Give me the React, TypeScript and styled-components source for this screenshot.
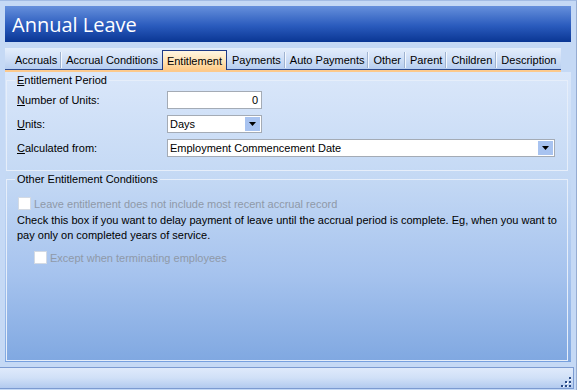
import React from 'react';
import styled, { createGlobalStyle } from 'styled-components';

const Global = createGlobalStyle`
  html, body { margin: 0; padding: 0; }
  body { font-family: "Liberation Sans", Arial, sans-serif; font-size: 11px; color: #000; }
`;

const Window = styled.div`
  width: 577px;
  height: 390px;
  box-sizing: border-box;
  background: #c5d9f5;
  border-top: 1px solid #a3bce4;
  border-right: 1px solid #95acd2;
  display: flex;
  flex-direction: column;
  overflow: hidden;
`;

const Body = styled.div`
  flex: 1;
  display: flex;
  flex-direction: column;
  padding: 5px 4px 0 5px;
  min-height: 0;
`;

const TitleBar = styled.div`
  height: 36px;
  flex: none;
  margin-right: 1px;
  background: linear-gradient(#6690dc, #2a5bbd 55%, #0a3694);
  color: #fff;
  font-family: "Open Sans", "Liberation Sans", sans-serif;
  font-size: 20px;
  display: flex;
  align-items: center;
  padding-left: 7px;
  box-sizing: border-box;
`;

const TabStrip = styled.div`
  margin-top: 6px;
  height: 21px;
  flex: none;
  width: fit-content;
  padding-left: 5px;
  padding-right: 1px;
  display: flex;
  align-items: flex-end;
  background: linear-gradient(#e4eefc, #cbdcf5 60%, #b7cef0);
`;

const Tab = styled.div<{ $active?: boolean; $sep?: boolean }>`
  height: ${(p) => (p.$active ? '20px' : '21px')};
  margin-bottom: ${(p) => (p.$active ? '-1px' : '0')};
  z-index: ${(p) => (p.$active ? 1 : 0)};
  box-sizing: border-box;
  display: flex;
  align-items: flex-end;
  padding: ${(p) => (p.$active ? '0 4px 2px 4px' : '0 4px 2px 5px')};
  line-height: 13px;
  white-space: nowrap;
  position: relative;
  background: ${(p) => (p.$active ? 'linear-gradient(#fff6e2, #ffe2b4 55%, #ffca86)' : 'transparent')};
  border: ${(p) => (p.$active ? '1px solid #1e3a86' : 'none')};
  border-bottom: none;
  &::before {
    content: '';
    display: ${(p) => (p.$sep ? 'block' : 'none')};
    position: absolute;
    left: -1px;
    top: 4px;
    bottom: 1px;
    width: 1px;
    background: #9fb3d0;
    box-shadow: 1px 0 0 #f4f8fe;
  }
`;

const TabLine = styled.div`
  width: 556px;
  height: 1px;
  flex: none;
  background: #2d4c92;
  border-bottom: 2px solid #fcc98c;
`;

const Panel = styled.div`
  flex: 1;
  display: flex;
  flex-direction: column;
  padding: 2px 3px 0 1px;
  margin-right: 1px;
  background: linear-gradient(#dae7fa, #c3d8f4 38%, #a6c3ee 70%, #80a8e1);
  border-bottom: 1px solid #77a0de;
  min-height: 0;
`;

const Group = styled.fieldset<{ $grow?: boolean }>`
  margin: ${(p) => (p.$grow ? '2px 0 0 0' : '0')};
  border: 1px solid #e6eefa;
  padding: ${(p) => (p.$grow ? '11px 9px 0 10px' : '4px 9px 13px 10px')};
  flex: ${(p) => (p.$grow ? 1 : 'none')};
  min-width: 0;
`;

const Legend = styled.legend`
  padding: 0 2px;
  margin-left: -2px;
  line-height: 13px;
  font-size: 11px;
`;

const FormGrid = styled.div`
  display: grid;
  grid-template-columns: 150px auto;
  grid-auto-rows: 18px;
  row-gap: 6px;
  align-items: center;
`;

const Label = styled.label`
  white-space: nowrap;
`;

const Box = styled.div<{ $w: number; $right?: boolean }>`
  width: ${(p) => p.$w}px;
  height: 18px;
  box-sizing: border-box;
  border: 1px solid #a4abb5;
  background: #fff;
  display: flex;
  align-items: center;
  justify-content: ${(p) => (p.$right ? 'flex-end' : 'space-between')};
  padding: ${(p) => (p.$right ? '0 3px 0 2px' : '0 1px 0 2px')};
`;

const DropBtn = styled.div`
  width: 15px;
  height: 14px;
  background: #a8c3f0;
  display: flex;
  align-items: center;
  justify-content: center;
`;

const CheckRow = styled.div<{ $indent?: number }>`
  display: flex;
  align-items: center;
  gap: 3px;
  height: 13px;
  margin-left: ${(p) => p.$indent ?? 1}px;
  color: #8f99a8;
  white-space: nowrap;
`;

const CheckBox = styled.span`
  width: 13px;
  height: 13px;
  box-sizing: border-box;
  background: #fff;
  border: 1px solid #d3dae4;
  flex: none;
`;

const Help = styled.p`
  margin: 3px 0 8px 0;
  line-height: 15px;
  width: 545px;
`;

const StatusBar = styled.div`
  flex: none;
  height: 22px;
  margin-top: 5px;
  margin-bottom: 1px;
  box-sizing: border-box;
  border-top: 1px solid #7c9bd1;
  border-bottom: 1px solid #7c9bd1;
  border-right: 1px solid #7c9bd1;
  margin-right: 2px;
  background: linear-gradient(#dfeafb, #d0e0f7 50%, #b2caef);
  display: flex;
  justify-content: flex-end;
  align-items: flex-end;
  padding: 0 2px 1px 0;
`;

const Arrow = () => (
  <svg width="7" height="4" viewBox="0 0 7 4">
    <polygon points="0,0 7,0 3.5,4" fill="#000" />
  </svg>
);

const Grip = () => (
  <svg width="10" height="10" viewBox="0 0 10 10">
    {[
      [8, 0],
      [4, 4],
      [8, 4],
      [0, 8],
      [4, 8],
      [8, 8],
    ].map(([x, y], i) => (
      <g key={i}>
        <rect x={x + 1} y={y + 1} width="2" height="2" fill="#fff" />
        <rect x={x} y={y} width="2" height="2" fill="#2a4a86" />
      </g>
    ))}
  </svg>
);

const tabs = ['Accruals', 'Accrual Conditions', 'Entitlement', 'Payments', 'Auto Payments', 'Other', 'Parent', 'Children', 'Description'];
const activeIndex = 2;

export default function App() {
  return (
    <>
      <Global />
      <Window>
        <Body>
          <TitleBar>Annual Leave</TitleBar>
          <TabStrip>
            {tabs.map((t, i) => (
              <Tab key={t} $active={i === activeIndex} $sep={i > 0 && i !== activeIndex && i !== activeIndex + 1}>
                {t}
              </Tab>
            ))}
          </TabStrip>
          <TabLine />
          <Panel>
            <Group>
              <Legend>
                <u>E</u>ntitlement Period
              </Legend>
              <FormGrid>
                <Label>
                  <u>N</u>umber of Units:
                </Label>
                <Box $w={95} $right>
                  0
                </Box>
                <Label>
                  <u>U</u>nits:
                </Label>
                <Box $w={95}>
                  <span>Days</span>
                  <DropBtn>
                    <Arrow />
                  </DropBtn>
                </Box>
                <Label>
                  <u>C</u>alculated from:
                </Label>
                <Box $w={388}>
                  <span>Employment Commencement Date</span>
                  <DropBtn>
                    <Arrow />
                  </DropBtn>
                </Box>
              </FormGrid>
            </Group>
            <Group $grow>
              <Legend>Other Entitlement Conditions</Legend>
              <CheckRow>
                <CheckBox />
                Leave entitlement does not include most recent accrual record
              </CheckRow>
              <Help>
                Check this box if you want to delay payment of leave until the accrual period is complete. Eg, when you want to pay only on completed years of service.
              </Help>
              <CheckRow $indent={17}>
                <CheckBox />
                Except when terminating employees
              </CheckRow>
            </Group>
          </Panel>
        </Body>
        <StatusBar>
          <Grip />
        </StatusBar>
      </Window>
    </>
  );
}
